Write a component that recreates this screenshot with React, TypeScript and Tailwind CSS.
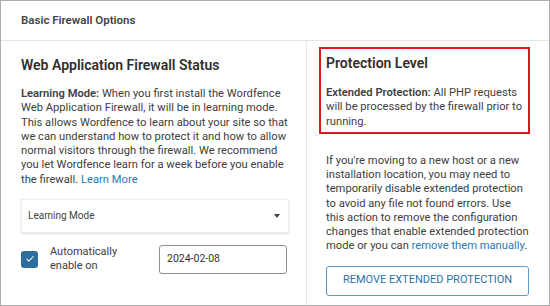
import { Check } from "lucide-react"

export default function App() {
  return (
    <div
      className="w-[550px] h-[306px] bg-white border border-[#adadad] flex flex-col overflow-hidden text-[#3c3c3c]"
      style={{ fontFamily: "Roboto, 'Liberation Sans', sans-serif" }}
    >
      {/* header */}
      <div className="h-[40px] shrink-0 border-b border-[#e4e4e4] flex items-center px-[20px]">
        <span className="text-[11.5px] font-semibold text-[#3f4448]">Basic Firewall Options</span>
      </div>

      <div className="flex flex-1">
        {/* left column */}
        <div className="w-[306px] shrink-0 border-r border-[#e8e8e8] pl-[20px] pr-[17px] pt-[15px]">
          <h2 className="text-[14px] leading-[18px] font-semibold text-[#2f2f2f]">Web Application Firewall Status</h2>
          <p className="mt-[13px] -mr-[4px] text-[11.2px] leading-[14.25px] text-[#404040]">
            <span className="font-semibold">Learning Mode:</span> When you first install the Wordfence Web
            Application Firewall, it will be in learning mode. This allows Wordfence to learn about your site so
            that we can understand how to protect it and how to allow normal visitors through the firewall. We
            recommend you let Wordfence learn for a week before you enable the firewall.{" "}
            <a className="text-[#2d78b0]">Learn More</a>
          </p>

          <div className="mt-[12px] h-[34px] border border-[#ececec] shadow-[0_1px_2px_rgba(0,0,0,0.12)] flex items-center justify-between pl-[6px] pr-[8px]">
            <span className="text-[10px] text-[#444]">Learning Mode</span>
            <span className="w-0 h-0 border-l-[3px] border-r-[3px] border-t-[4px] border-l-transparent border-r-transparent border-t-[#444]" />
          </div>

          <div className="mt-[12px] flex items-center">
            <div className="w-[17px] h-[17px] rounded-[3px] bg-[#2c6f9e] flex items-center justify-center">
              <Check className="w-[10px] h-[10px] text-white" strokeWidth={2.5} />
            </div>
            <span className="ml-[12px] w-[96px] text-[11px] leading-[14px] text-[#404040]">
              Automatically enable on
            </span>
            <div className="ml-[13px] w-[128px] h-[29px] rounded-[3px] border border-[#8f8f8f] flex items-center px-[7px]">
              <span className="text-[10.5px] text-[#333]">2024-02-08</span>
            </div>
          </div>
        </div>

        {/* right column */}
        <div className="flex-1 pl-[19px] pr-[20px] pt-[6px]">
          <div className="-ml-[7px] mr-[-1px] border-2 border-[#e3141b] pl-[5px] pr-[4px] pt-[5px] pb-[3px]">
            <h2 className="text-[14px] leading-[18px] font-semibold text-[#2f2f2f]">Protection Level</h2>
            <p className="mt-[14px] text-[11.2px] leading-[14.25px] text-[#404040]">
              <span className="font-semibold">Extended Protection:</span> All PHP requests will be processed by the
              firewall prior to running.
            </p>
          </div>

          <p className="mt-[20px] text-[11.2px] leading-[14.25px] text-[#404040]">
            If you're moving to a new host or a new installation location, you may need to temporarily disable
            extended protection to avoid any file not found errors. Use this action to remove the configuration
            changes that enable extended protection mode or you can{" "}
            <a className="text-[#2d78b0]">remove them manually</a>.
          </p>

          <button className="mt-[12px] w-full h-[30px] rounded-[3px] border border-[#5b9ccb] text-[11px] text-[#2d72a6]">
            REMOVE EXTENDED PROTECTION
          </button>
        </div>
      </div>
    </div>
  )
}
